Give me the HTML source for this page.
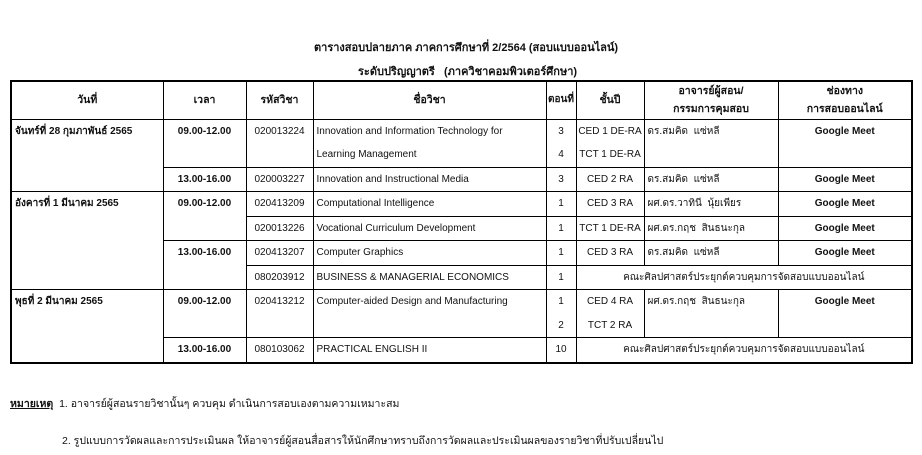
<!DOCTYPE html>
<html><head><meta charset="utf-8"><style>
body{margin:0;width:922px;height:455px;background:#fff;font-family:"Liberation Sans","Noto Sans CJK SC",sans-serif;color:#111;position:relative;overflow:hidden}
.t{position:absolute;font-size:11px;font-weight:bold;white-space:nowrap}
table{position:absolute;left:10px;top:80px;width:901px;border-collapse:collapse;table-layout:fixed;border:2px solid #000;font-size:10px}
td{border:1px solid #000;padding:0 3px;vertical-align:top;line-height:23.5px;white-space:nowrap;overflow:hidden}
.c{text-align:center;padding:0}.b{font-weight:bold}
th{border:1px solid #000;font-weight:bold;font-size:10.5px;line-height:18px;vertical-align:middle;white-space:nowrap;padding:0;overflow:hidden}
.n{position:absolute;font-size:10.5px;white-space:nowrap}
</style></head><body>
<div class="t" style="left:314px;top:38px">ตารางสอบปลายภาค ภาคการศึกษาที่ 2/2564 (สอบแบบออนไลน์)</div>
<div class="t" style="left:358px;top:62px">ระดับปริญญาตรี &nbsp; (ภาควิชาคอมพิวเตอร์ศึกษา)</div>
<table>
<colgroup><col style="width:152px"><col style="width:83px"><col style="width:67px"><col style="width:233px"><col style="width:30px"><col style="width:68px"><col style="width:134px"><col style="width:134px"></colgroup>
<tr style="height:38px"><th>วันที่</th><th>เวลา</th><th>รหัสวิชา</th><th>ชื่อวิชา</th><th style="font-size:10px">ตอนที่</th><th>ชั้นปี</th><th>อาจารย์ผู้สอน/<br>กรรมการคุมสอบ</th><th>ช่องทาง<br>การสอบออนไลน์</th></tr>
<tr style="height:48px"><td rowspan="2" class="b">จันทร์ที่ 28 กุมภาพันธ์ 2565</td><td class="c b">09.00-12.00</td><td class="c">020013224</td><td>Innovation and Information Technology for<br>Learning Management</td><td class="c">3<br>4</td><td class="c">CED 1 DE-RA<br>TCT 1 DE-RA</td><td>ดร.สมคิด &nbsp;แซ่หลี</td><td class="c b">Google Meet</td></tr>
<tr style="height:24px"><td class="c b">13.00-16.00</td><td class="c">020003227</td><td>Innovation and Instructional Media</td><td class="c">3</td><td class="c">CED 2 RA</td><td>ดร.สมคิด &nbsp;แซ่หลี</td><td class="c b">Google Meet</td></tr>
<tr style="height:24px"><td rowspan="4" class="b">อังคารที่ 1 มีนาคม 2565</td><td rowspan="2" class="c b">09.00-12.00</td><td class="c">020413209</td><td>Computational Intelligence</td><td class="c">1</td><td class="c">CED 3 RA</td><td>ผศ.ดร.วาทินี &nbsp;นุ้ยเพียร</td><td class="c b">Google Meet</td></tr>
<tr style="height:24px"><td class="c">020013226</td><td>Vocational Curriculum Development</td><td class="c">1</td><td class="c">TCT 1 DE-RA</td><td>ผศ.ดร.กฤช &nbsp;สินธนะกุล</td><td class="c b">Google Meet</td></tr>
<tr style="height:24px"><td rowspan="2" class="c b">13.00-16.00</td><td class="c">020413207</td><td>Computer Graphics</td><td class="c">1</td><td class="c">CED 3 RA</td><td>ดร.สมคิด &nbsp;แซ่หลี</td><td class="c b">Google Meet</td></tr>
<tr style="height:24px"><td class="c">080203912</td><td>BUSINESS &amp; MANAGERIAL ECONOMICS</td><td class="c">1</td><td colspan="3" class="c">คณะศิลปศาสตร์ประยุกต์ควบคุมการจัดสอบแบบออนไลน์</td></tr>
<tr style="height:48px"><td rowspan="2" class="b">พุธที่ 2 มีนาคม 2565</td><td class="c b">09.00-12.00</td><td class="c">020413212</td><td>Computer-aided Design and Manufacturing</td><td class="c">1<br>2</td><td class="c">CED 4 RA<br>TCT 2 RA</td><td>ผศ.ดร.กฤช &nbsp;สินธนะกุล</td><td class="c b">Google Meet</td></tr>
<tr style="height:24px"><td class="c b">13.00-16.00</td><td class="c">080103062</td><td>PRACTICAL ENGLISH II</td><td class="c">10</td><td colspan="3" class="c">คณะศิลปศาสตร์ประยุกต์ควบคุมการจัดสอบแบบออนไลน์</td></tr>
</table>
<div class="n" style="left:10px;top:395px"><b style="text-decoration:underline">หมายเหตุ</b>&nbsp; 1. อาจารย์ผู้สอนรายวิชานั้นๆ ควบคุม ดำเนินการสอบเองตามความเหมาะสม</div>
<div class="n" style="left:62px;top:432px">2. รูปแบบการวัดผลและการประเมินผล ให้อาจารย์ผู้สอนสื่อสารให้นักศึกษาทราบถึงการวัดผลและประเมินผลของรายวิชาที่ปรับเปลี่ยนไป</div>
</body></html>
